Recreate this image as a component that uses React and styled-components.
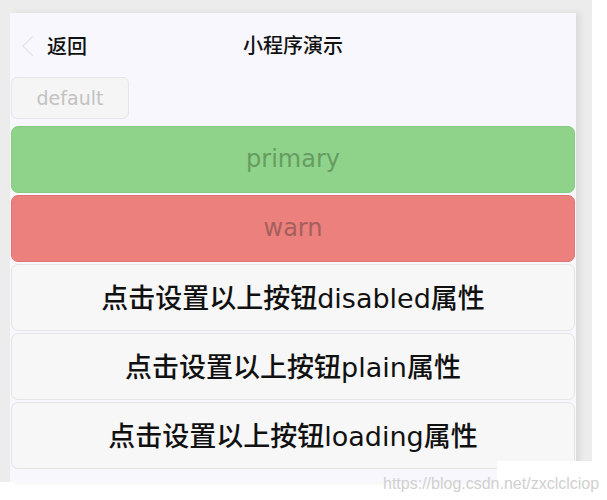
import React from "react"
import styled, { createGlobalStyle } from "styled-components"

const GlobalStyle = createGlobalStyle`
  html, body {
    margin: 0;
    padding: 0;
    background: #ffffff;
  }
  body {
    font-family: "DejaVu Sans", "Noto Sans CJK SC", sans-serif;
  }
`

const Page = styled.div`
  position: relative;
  width: 607px;
  height: 500px;
  overflow: hidden;
`

const Backdrop = styled.div`
  width: 582px;
  height: 469px;
  padding: 13px 0 0 10px;
  background: #ececec;
`

const Phone = styled.div`
  width: 566px;
  height: 469px;
  background: #f8f7fd;
  box-shadow: 4px 0 6px rgba(0, 0, 0, 0.08);
  display: flex;
  flex-direction: column;
`

const Header = styled.div`
  position: relative;
  height: 64px;
  display: flex;
  align-items: center;
  justify-content: center;
`

const Back = styled.div`
  position: absolute;
  left: 12px;
  top: 18px;
  display: flex;
  align-items: center;
  gap: 13px;
  font-family: "Noto Sans CJK SC", sans-serif;
  font-size: 20px;
  font-weight: 500;
  color: #111;
`

const Title = styled.div`
  font-family: "Noto Sans CJK SC", sans-serif;
  font-size: 20px;
  font-weight: 500;
  color: #111;
  margin-top: -2px;
`

const SmallButton = styled.div`
  align-self: flex-start;
  width: 116px;
  height: 40px;
  margin-left: 1px;
  border: 1px solid #e6e6e6;
  border-radius: 6px;
  background: #f5f5f5;
  color: #c2c2c2;
  font-size: 19px;
  display: flex;
  align-items: center;
  justify-content: center;
`

const Buttons = styled.div`
  margin-top: 7px;
  display: flex;
  flex-direction: column;
  gap: 2px;
`

const tones = {
  primary: { bg: "#8fd38b", fg: "#679c61", border: "#86c982" },
  warn: { bg: "#ec807c", fg: "#a55f5e", border: "#e07470" },
  normal: { bg: "#f7f7f7", fg: "#111111", border: "#e4e4e4" },
}

const Button = styled.div`
  height: 67px;
  margin: 0 1px;
  box-sizing: border-box;
  border: 1px solid ${({ $tone }) => tones[$tone].border};
  border-radius: 7px;
  background: ${({ $tone }) => tones[$tone].bg};
  color: ${({ $tone }) => tones[$tone].fg};
  font-family: "DejaVu Sans", "Noto Sans CJK SC", sans-serif;
  font-size: ${({ $tone }) => ($tone === "normal" ? "27px" : "24px")};
  font-weight: ${({ $tone }) => ($tone === "normal" ? 500 : 400)};
  display: flex;
  align-items: center;
  justify-content: center;
  padding-bottom: 2px;
`

const Watermark = styled.div`
  position: absolute;
  left: 383px;
  top: 461px;
  width: 224px;
  height: 39px;
  background: linear-gradient(
    to right,
    transparent 0,
    transparent 114px,
    #ffffff 114px
  );
  display: flex;
  align-items: flex-end;
  padding-bottom: 7px;
  box-sizing: border-box;
  color: #d0d0d0;
  font-family: "Liberation Sans", sans-serif;
  font-size: 16px;
  white-space: nowrap;
`

const Chevron = () => (
  <svg width="12" height="22" viewBox="0 0 12 22">
    <polyline points="11,1 1,11 11,21" fill="none" stroke="#e7e6ee" strokeWidth="1.6" />
  </svg>
)

const App = () => {
  return (
    <Page>
      <GlobalStyle />
      <Backdrop>
        <Phone>
          <Header>
            <Back>
              <Chevron />
              返回
            </Back>
            <Title>小程序演示</Title>
          </Header>
          <SmallButton>default</SmallButton>
          <Buttons>
            <Button $tone="primary">primary</Button>
            <Button $tone="warn">warn</Button>
            <Button $tone="normal">点击设置以上按钮disabled属性</Button>
            <Button $tone="normal">点击设置以上按钮plain属性</Button>
            <Button $tone="normal">点击设置以上按钮loading属性</Button>
          </Buttons>
        </Phone>
      </Backdrop>
      <Watermark>https://blog.csdn.net/zxclclciop</Watermark>
    </Page>
  )
}

export default App
